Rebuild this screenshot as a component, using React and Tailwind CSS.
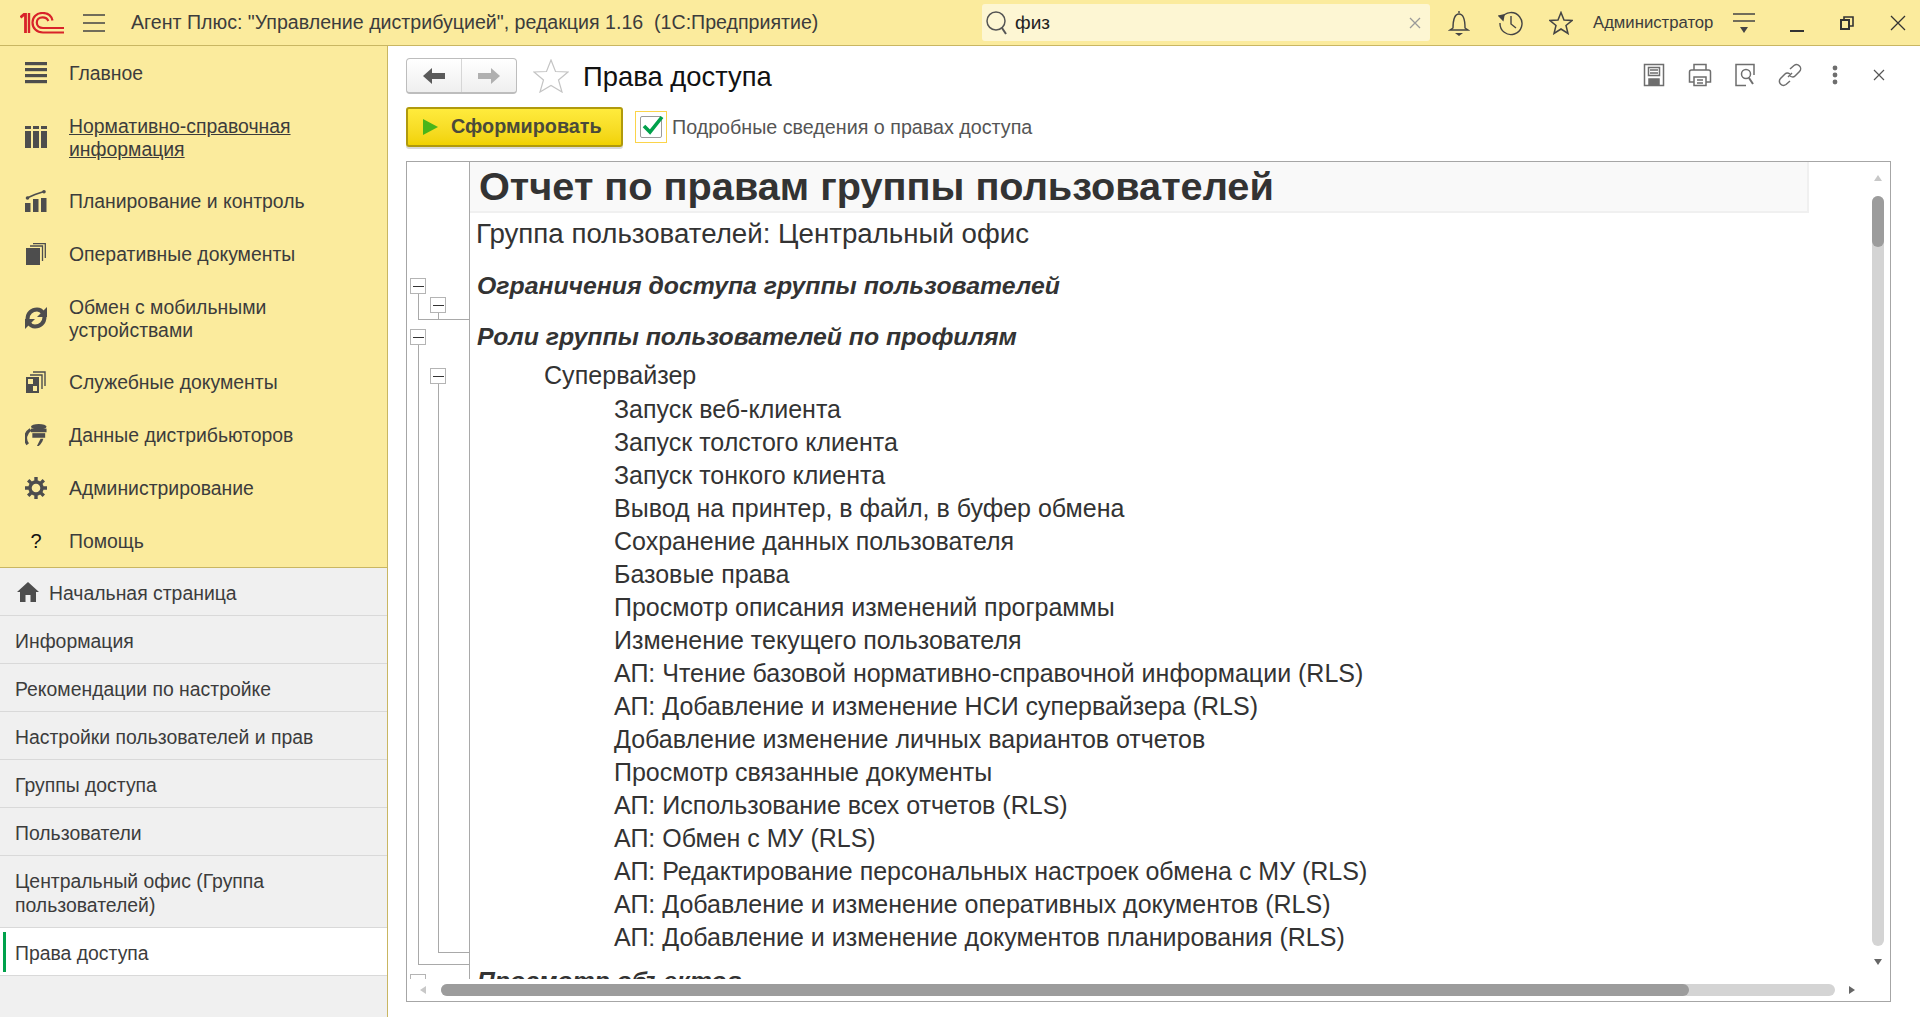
const ff = { fontFamily: '"Liberation Sans", Arial, sans-serif' };

const Logo = () => (
  <svg width="44" height="22" viewBox="0 0 44 22" fill="none" stroke="#d8232a">
    <path d="M0.5 5.5 L4 2.5 H5.5 V21" strokeWidth="2.8" />
    <path d="M9 1 V21" strokeWidth="2.4" />
    <path d="M44 20.5 H23 C16.5 20.5 12.5 16 12.5 10.5 C12.5 5 16.5 1 22.5 1 C28 1 31.5 4 32.5 8.5" strokeWidth="2.2" />
    <path d="M44 16 H23 C19 16 16.8 13.5 16.8 10.5 C16.8 7.5 19 5.4 22.5 5.4 C25.5 5.4 27.5 6.8 28.3 9" strokeWidth="2.2" />
  </svg>
);

const SideIcon = ({ name }) => {
  const c = "#4d4d4d";
  if (name === "menu")
    return (
      <svg width="22" height="22" viewBox="0 0 22 22" fill={c}>
        <rect x="0" y="0" width="22" height="3.2" /><rect x="0" y="6" width="22" height="3.2" />
        <rect x="0" y="12" width="22" height="3.2" /><rect x="0" y="18" width="22" height="3.2" />
      </svg>
    );
  if (name === "catalog")
    return (
      <svg width="22" height="22" viewBox="0 0 22 22" fill={c}>
        <rect x="0" y="0" width="6" height="3" /><rect x="8" y="0" width="6" height="3" /><rect x="16" y="0" width="6" height="3" />
        <rect x="0" y="5" width="6" height="17" /><rect x="8" y="5" width="6" height="17" /><rect x="16" y="5" width="6" height="17" />
      </svg>
    );
  if (name === "plan")
    return (
      <svg width="22" height="22" viewBox="0 0 22 22" fill={c}>
        <rect x="0" y="13" width="5.5" height="9" /><rect x="8" y="9" width="5.5" height="13" /><rect x="16" y="8" width="5.5" height="14" />
        <path d="M2 8 L10 4.5 L19 1.5" stroke={c} strokeWidth="1.6" fill="none" />
        <circle cx="2.5" cy="8" r="1.8" /><circle cx="19" cy="1.8" r="1.8" />
      </svg>
    );
  if (name === "docs")
    return (
      <svg width="20" height="22" viewBox="0 0 20 22" fill={c}>
        <rect x="0" y="5" width="14" height="17" />
        <path d="M4 3 H16.5 V18" stroke={c} strokeWidth="1.3" fill="none" />
        <path d="M7 0.7 H19.3 V15" stroke={c} strokeWidth="1.3" fill="none" />
      </svg>
    );
  if (name === "sync")
    return (
      <svg width="22" height="22" viewBox="0 0 22 22" fill="none" stroke={c} strokeWidth="4">
        <path d="M2.5 12 C2.5 6 7 2.5 12 2.5 C14.5 2.5 16.5 3.5 18 6" />
        <path d="M19.5 10 C19.5 16 15 19.5 10 19.5 C7.5 19.5 5.5 18.5 4 16" />
        <path d="M22 0 V10 H12 Z" fill={c} stroke="none" />
        <path d="M0 22 V12 H10 Z" fill={c} stroke="none" />
      </svg>
    );
  if (name === "service")
    return (
      <svg width="20" height="22" viewBox="0 0 20 22" fill={c}>
        <path fillRule="evenodd" d="M0 6 H13 V22 H0 Z M7 8 V13 H2 V8 Z M11 15 V20 H7 V15 Z" />
        <path d="M4 4 H16 V18" stroke={c} strokeWidth="1.4" fill="none" />
        <path d="M7 1 H19 V15" stroke={c} strokeWidth="1.4" fill="none" />
      </svg>
    );
  if (name === "data")
    return (
      <svg width="24" height="24" viewBox="0 0 24 24" fill={c}>
        <ellipse cx="15" cy="3" rx="8.5" ry="3" />
        <rect x="6.5" y="5" width="17" height="4" /><rect x="8" y="10" width="14" height="5" />
        <path d="M6 6 C0 10 -1 17 3 22" stroke={c} strokeWidth="3.4" fill="none" />
        <path d="M13 24 L17 16 L20 16 C19 20 17 22 15 24 Z" />
      </svg>
    );
  if (name === "gear")
    return (
      <svg width="22" height="22" viewBox="0 0 22 22" fill="none" stroke={c}>
        <circle cx="11" cy="11" r="6" strokeWidth="3.4" />
        <path d="M11 0 V4.5 M11 17.5 V22 M0 11 H4.5 M17.5 11 H22 M3.2 3.2 L6.4 6.4 M15.6 15.6 L18.8 18.8 M3.2 18.8 L6.4 15.6 M15.6 6.4 L18.8 3.2" strokeWidth="3.4" />
      </svg>
    );
  return <span className="text-[20px] leading-none text-[#111]">?</span>;
};

const SideItem = ({ icon, children, two, under }) => (
  <div className={`flex items-center pl-[25px] ${two ? "h-[75px]" : "h-[53px]"}`}>
    <div className="w-[22px] flex justify-center shrink-0"><SideIcon name={icon} /></div>
    <div className={`ml-[22px] text-[19.4px] leading-[23px] text-[#3c3c3c] ${two ? "pt-[2px]" : "pt-[1px]"} ${under ? "underline" : ""}`}>{children}</div>
  </div>
);

const Row = ({ children, h = "h-[48px]", active, home }) => (
  <div className={`relative flex items-center border-b border-[#d9d9d9] text-[19.4px] leading-[24px] text-[#3c3c3c] ${h} ${active ? "bg-white" : ""} ${home ? "pl-[17px]" : "pl-[15px]"}`}>
    {active && <div className="absolute left-[3px] top-[4px] bottom-[3px] w-[3px] bg-[#00a14b]" />}
    {home && (
      <svg width="22" height="20" viewBox="0 0 22 20" fill="#4d4d4d" className="mr-[10px]">
        <path d="M11 0 L22 10 H19 V20 H13.5 V13 H8.5 V20 H3 V10 H0 Z" />
      </svg>
    )}
    <span className="pt-[3px]">{children}</span>
  </div>
);

const Tree = () => (
  <svg width="62" height="817" viewBox="0 0 62 817" fill="none" shapeRendering="crispEdges" className="block">
    <g stroke="#a9a9a9">
      <path d="M11.5 131 V157.5 H62" />
      <path d="M31.5 150 V157.5" />
      <path d="M11.5 182 V802.5 H62" />
      <path d="M31.5 221 V790.5 H62" />
    </g>
    {[[4, 116], [24, 135], [4, 167], [24, 206], [4, 812]].map(([x, y], i) => (
      <g key={i}>
        <rect x={x - 0.5} y={y + 0.5} width="15" height="15" rx="1" fill="#fff" stroke="#b4b4b4" />
        {i < 4 && <path d={`M${x + 2} ${y + 8.5} H${x + 13}`} stroke="#333" />}
      </g>
    ))}
  </svg>
);

const items = [
  "Запуск веб-клиента",
  "Запуск толстого клиента",
  "Запуск тонкого клиента",
  "Вывод на принтер, в файл, в буфер обмена",
  "Сохранение данных пользователя",
  "Базовые права",
  "Просмотр описания изменений программы",
  "Изменение текущего пользователя",
  "АП: Чтение базовой нормативно-справочной информации (RLS)",
  "АП: Добавление и изменение НСИ супервайзера (RLS)",
  "Добавление изменение личных вариантов отчетов",
  "Просмотр связанные документы",
  "АП: Использование всех отчетов (RLS)",
  "АП: Обмен с МУ (RLS)",
  "АП: Редактирование персональных настроек обмена с МУ (RLS)",
  "АП: Добавление и изменение оперативных документов (RLS)",
  "АП: Добавление и изменение документов планирования (RLS)",
];

const G = ({ size = 24, children, c = "#6e6e6e", w = 1.5 }) => (
  <svg width={size} height={size} viewBox="0 0 24 24" fill="none" stroke={c} strokeWidth={w}>{children}</svg>
);

export default function App() {
  return (
    <div className="h-[1017px] w-[1920px] overflow-hidden flex flex-col bg-white" style={ff}>
      {/* Top bar */}
      <header className="h-[46px] shrink-0 flex items-center bg-[#fbeb9d] border-b border-[#c9b662]">
        <div className="ml-[20px] w-[44px] flex"><Logo /></div>
        <svg width="22" height="18" viewBox="0 0 22 18" stroke="#444" strokeWidth="1.4" className="ml-[19px]">
          <path d="M0 1 H22 M0 9 H22 M0 17 H22" />
        </svg>
        <div className="ml-[26px] w-[851px] pt-[1px] whitespace-pre text-[19.6px] text-[#3c3c3c]">Агент Плюс: "Управление дистрибуцией", редакция 1.16  (1С:Предприятие)</div>
        <div className="w-[448px] h-[37px] rounded-[3px] bg-[#fdf6d3] flex items-center pl-[3px] pr-[9px]">
          <svg width="24" height="26" viewBox="0 0 24 26" fill="none" stroke="#555" strokeWidth="1.5">
            <circle cx="11" cy="11" r="9" /><path d="M17 18 L21 24" strokeWidth="2" />
          </svg>
          <span className="ml-[6px] pt-[1px] text-[19px] text-[#222]">физ</span>
          <svg width="12" height="12" viewBox="0 0 12 12" stroke="#9a9a9a" strokeWidth="1.3" className="ml-auto"><path d="M1 1 L11 11 M11 1 L1 11" /></svg>
        </div>
        <svg width="22" height="26" viewBox="0 0 22 26" fill="none" stroke="#444" strokeWidth="1.4" className="ml-[18px]">
          <path d="M11 1 V3 M5 18 C5 12 6 4 11 4 C16 4 17 12 17 18 L20 20 H2 Z" />
          <path d="M7 23 H15 L11 26 Z" fill="#444" stroke="none" />
        </svg>
        <svg width="26" height="26" viewBox="0 0 26 26" fill="none" stroke="#444" strokeWidth="1.4" className="ml-[28px]">
          <path d="M3.5 8 A11 11 0 1 1 2 13" /><path d="M1 6 L6 5 L5 10 Z" fill="#444" /><path d="M13 6 V14 L18 18" />
        </svg>
        <svg width="24" height="24" viewBox="0 0 24 24" fill="none" stroke="#444" strokeWidth="1.5" className="ml-[25px]">
          <path d="M12 1.5 L15 9 L23 9.5 L17 14.5 L19 22.5 L12 18 L5 22.5 L7 14.5 L1 9.5 L9 9 Z" />
        </svg>
        <span className="ml-[20px] w-[126px] whitespace-nowrap text-[16.7px] text-[#3c3c3c]">Администратор</span>
        <svg width="22" height="22" viewBox="0 0 22 22" stroke="#444" strokeWidth="1.4" className="ml-[14px]">
          <path d="M0 2 H22 M0 9 H22" /><path d="M7 15 H15 L11 21 Z" fill="#444" stroke="none" />
        </svg>
        <svg width="14" height="14" viewBox="0 0 14 14" stroke="#333" strokeWidth="2" className="ml-[35px] mt-[6px]"><path d="M0 12 H14" /></svg>
        <svg width="14" height="14" viewBox="0 0 14 14" fill="none" stroke="#333" strokeWidth="1.6" className="ml-[36px]">
          <rect x="1" y="4" width="8" height="9" strokeWidth="2" /><path d="M4 3 V1 H13 V10 H10" />
        </svg>
        <svg width="16" height="16" viewBox="0 0 16 16" stroke="#333" strokeWidth="1.3" className="ml-[36px]"><path d="M1 1 L15 15 M15 1 L1 15" /></svg>
      </header>

      <div className="flex-1 flex min-h-0">
        {/* Sidebar */}
        <aside className="w-[388px] shrink-0 flex flex-col bg-[#f0f0f0] border-r border-[#c9b662]">
          <nav className="bg-[#fbeb9d] border-b border-[#c9b662] h-[522px]">
            <SideItem icon="menu">Главное</SideItem>
            <SideItem icon="catalog" two under>Нормативно-справочная<br />информация</SideItem>
            <SideItem icon="plan">Планирование и контроль</SideItem>
            <SideItem icon="docs">Оперативные документы</SideItem>
            <SideItem icon="sync" two>Обмен с мобильными<br />устройствами</SideItem>
            <SideItem icon="service">Служебные документы</SideItem>
            <SideItem icon="data">Данные дистрибьюторов</SideItem>
            <SideItem icon="gear">Администрирование</SideItem>
            <SideItem icon="help">Помощь</SideItem>
          </nav>
          <Row home>Начальная страница</Row>
          <Row>Информация</Row>
          <Row>Рекомендации по настройке</Row>
          <Row>Настройки пользователей и прав</Row>
          <Row>Группы доступа</Row>
          <Row>Пользователи</Row>
          <Row h="h-[72px]">Центральный офис (Группа<br />пользователей)</Row>
          <Row active>Права доступа</Row>
        </aside>

        {/* Main */}
        <main className="flex-1 min-w-0 flex flex-col pl-[18px] pr-[29px] pt-[12px]">
          <div className="h-[36px] flex items-center shrink-0">
            <div className="w-[111px] h-[36px] flex rounded-[4px] border border-[#bdbdbd] border-b-2 bg-gradient-to-b from-white to-[#efefef]">
              <div className="w-[55px] flex items-center justify-center border-r border-[#d6d6d6]">
                <svg width="22" height="16" viewBox="0 0 22 16" fill="#5a5a5a"><path d="M0 8 L9 0 V5 H22 V11 H9 V16 Z" /></svg>
              </div>
              <div className="flex-1 flex items-center justify-center">
                <svg width="22" height="16" viewBox="0 0 22 16" fill="#b0b0b0"><path d="M22 8 L13 0 V5 H0 V11 H13 V16 Z" /></svg>
              </div>
            </div>
            <svg width="36" height="34" viewBox="0 0 36 34" fill="#fff" stroke="#c4c4c4" strokeWidth="1.2" className="ml-[16px]">
              <path d="M18 1 L22.5 12.5 L35 13 L25.5 21 L29 33 L18 26.5 L7 33 L10.5 21 L1 13 L13.5 12.5 Z" />
            </svg>
            <h1 className="ml-[14px] pt-[1px] text-[27.4px] font-normal text-[#111] leading-none">Права доступа</h1>
            <div className="ml-auto flex items-center -mr-[10px] -mt-[2px]">
              <div className="w-[46px] flex justify-center">
                <G>
                  <path d="M2.5 1.5 H21.5 V22.5 H2.5 Z" />
                  <path d="M6.5 4.5 H17.5 V12.5 H6.5 Z M8 7 H16 M8 10 H16" />
                  <path d="M7 22 V16 H17 V22 Z M11 22 V18 H14 V22 Z" fill="#6e6e6e" />
                </G>
              </div>
              <div className="w-[46px] flex justify-center">
                <G>
                  <path d="M6 7 V1.5 H18 V7" />
                  <path d="M6 19 H1.5 V9 C1.5 8 2.5 7 3.5 7 H20.5 C21.5 7 22.5 8 22.5 9 V19 H18" />
                  <path d="M6 14 H18 V22.5 H6 Z M9 17 H15 M9 20 H15" />
                </G>
              </div>
              <div className="w-[44px] flex justify-center">
                <G>
                  <path d="M13 22.5 H3 V1.5 H21 V12" />
                  <circle cx="13" cy="11" r="4.5" /><path d="M16 15 L20 21" strokeWidth="2" />
                </G>
              </div>
              <div className="w-[46px] flex justify-center">
                <G>
                  <path d="M10 14 L14 10" />
                  <path d="M12 6 L16 2.5 C18 1 20 1.5 21.5 3 C23 4.5 23 7 21.5 8.5 L17 13 C15.5 14.5 13.5 14 12 13" />
                  <path d="M12 18 L8 21.5 C6 23 4 22.5 2.5 21 C1 19.5 1 17 2.5 15.5 L7 11 C8.5 9.5 10.5 10 12 11" />
                </G>
              </div>
              <div className="w-[44px] flex justify-center">
                <svg width="6" height="20" viewBox="0 0 6 20" fill="#6e6e6e"><circle cx="3" cy="3" r="2.4" /><circle cx="3" cy="10" r="2.4" /><circle cx="3" cy="17" r="2.4" /></svg>
              </div>
              <div className="w-[44px] flex justify-center">
                <svg width="12" height="12" viewBox="0 0 12 12" stroke="#555" strokeWidth="1.2"><path d="M1 1 L11 11 M11 1 L1 11" /></svg>
              </div>
            </div>
          </div>

          <div className="h-[40px] mt-[13px] flex items-center shrink-0">
            <button className="w-[217px] h-[40px] rounded-[3px] border-2 border-[#b09a0c] shadow-[0_2px_0_#d9d9d9] bg-gradient-to-b from-[#ffeb3c] to-[#f1d200] flex items-center pl-[15px]">
              <svg width="15" height="16" viewBox="0 0 15 16" fill="#49b51a"><path d="M0 0 L15 8 L0 16 Z" /></svg>
              <span className="ml-[13px] text-[19.8px] font-bold text-[#4a4a3a] leading-none">Сформировать</span>
            </button>
            <div className="ml-[12px] w-[32px] h-[32px] border border-[#fbd44a] flex items-center justify-center relative">
              <div className="w-[22px] h-[22px] rounded-[2px] border border-[#9a9a9a] bg-white" />
              <svg width="22" height="20" viewBox="0 0 22 20" fill="none" stroke="#00a14b" strokeWidth="3.6" className="absolute left-[6px] top-[3px]">
                <path d="M2 11 L8 17 L20 2" />
              </svg>
            </div>
            <span className="ml-[5px] pt-[2px] text-[19.7px] text-[#555]">Подробные сведения о правах доступа</span>
          </div>

          {/* Report */}
          <section className="mt-[14px] h-[841px] shrink-0 border border-[#a6a6a6] flex flex-col">
            <div className="flex-1 min-h-0 flex overflow-hidden">
              <div className="w-[63px] shrink-0 border-r border-[#a9a9a9]"><Tree /></div>
              <div className="flex-1 min-w-0 overflow-hidden text-[#333]">
                <div className="w-[1339px] h-[51px] bg-[#f9f9f9] border-r-2 border-b-2 border-[#f0f0f0] pl-[9px] text-[39.7px] font-bold leading-[49px]">Отчет по правам группы пользователей</div>
                <div className="pl-[6px] h-[42px] text-[27.7px] leading-[42px]">Группа пользователей: Центральный офис</div>
                <div className="pl-[7px] h-[60px] text-[24.8px] leading-[61px] font-bold italic">Ограничения доступа группы пользователей</div>
                <div className="pl-[7px] h-[42px] text-[24.8px] leading-[43px] font-bold italic">Роли группы пользователей по профилям</div>
                <div className="pl-[74px] h-[36px] text-[25.1px] leading-[36px]">Супервайзер</div>
                {items.map((t) => (
                  <div key={t} className="pl-[144px] h-[33px] text-[25px] leading-[33px]">{t}</div>
                ))}
                <div className="pl-[7px] h-[42px] mt-[6px] text-[24.8px] leading-[42px] font-bold italic">Просмотр объектов</div>
              </div>
              {/* vertical scrollbar */}
              <div className="w-[20px] shrink-0 flex flex-col items-center pt-[13px] mr-[2px] ml-[1px]">
                <svg width="8" height="6" viewBox="0 0 8 6" fill="#c8c8c8"><path d="M4 0 L8 6 H0 Z" /></svg>
                <div className="mt-[15px] w-[12px] h-[750px] rounded-[6px] bg-[#d4d4d4]">
                  <div className="h-[51px] rounded-[6px] bg-[#9c9c9c]" />
                </div>
                <svg width="8" height="6" viewBox="0 0 8 6" fill="#666" className="mt-[13px]"><path d="M0 0 H8 L4 6 Z" /></svg>
              </div>
            </div>
            {/* horizontal scrollbar */}
            <div className="h-[22px] shrink-0 flex items-center pl-[13px]">
              <svg width="6" height="8" viewBox="0 0 6 8" fill="#c8c8c8"><path d="M6 0 V8 L0 4 Z" /></svg>
              <div className="ml-[15px] w-[1394px] h-[12px] rounded-[6px] bg-[#d4d4d4]">
                <div className="w-[1248px] h-[12px] rounded-[6px] bg-[#9c9c9c]" />
              </div>
              <svg width="6" height="8" viewBox="0 0 6 8" fill="#666" className="ml-[14px]"><path d="M0 0 L6 4 L0 8 Z" /></svg>
            </div>
          </section>
        </main>
      </div>
    </div>
  );
}
